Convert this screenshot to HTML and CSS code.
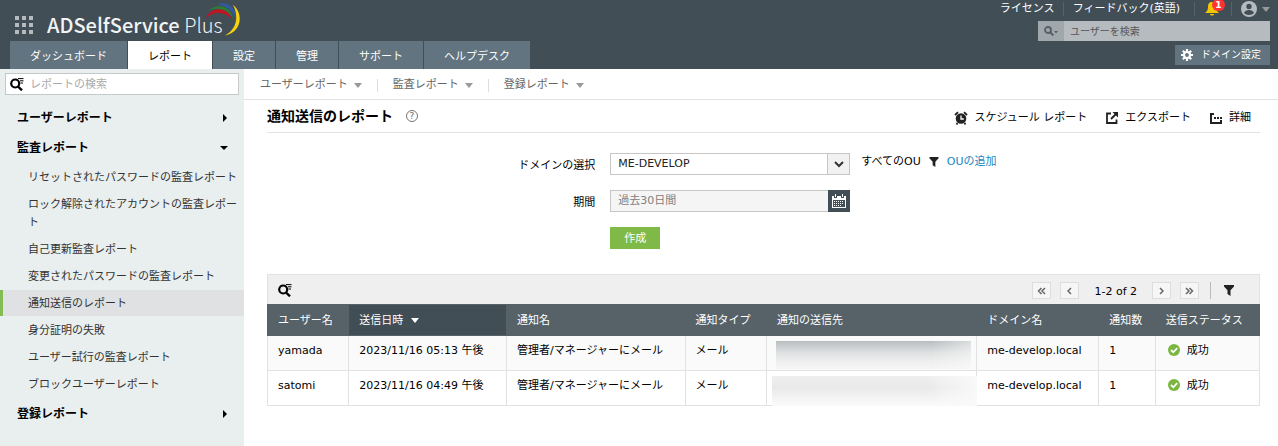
FILE: index.html
```html
<!DOCTYPE html>
<html lang="ja">
  <head>
    <title>ADSelfService Plus</title>
    <meta charset="utf-8" />
    <meta name="viewport" content="width=device-width" />
    <link rel="stylesheet" href="styles.css">
  </head>
  <body>
    <!-- shared icons -->
    <svg class="sprite">
      <symbol id="icon-find" viewBox="0 0 14 13">
        <circle cx="5.200" cy="5.500" r="4" fill="none" stroke="#000" stroke-width="2.2" />
        <path d="M8 8.500l4 3.800" fill="none" stroke="#000" stroke-width="2.4" />
        <path d="M8 .6h5.500M10 2.800h3.500M10.500 5h2.500" stroke="#000" />
      </symbol>
      <symbol id="icon-filter" viewBox="0 0 10 11">
        <path d="M0 0h10v1.5L6.5 5.2V11L3.5 9V5.2L0 1.500z" fill="#222" />
      </symbol>
      <symbol id="icon-ok" viewBox="0 0 12 12">
        <circle cx="6" cy="6" r="6" fill="#7ab640" />
        <path d="M3 6l2.300 2.300L9.200 4.200" fill="none" stroke="#fff" stroke-width="1.8" />
      </symbol>
    </svg>

    <header class="header">
      <div class="headerLeft">
        <div class="brand">
          <button class="apps" aria-label="アプリ">
            <svg width="18" height="18" viewBox="0 0 18 18" fill="#b4babd">
              <path d="M0 0h4v4H0zM7 0h4v4H7zM14 0h4v4h-4zM0 7h4v4H0zM7 7h4v4H7zM14 7h4v4h-4zM0 14h4v4H0zM7 14h4v4H7zM14 14h4v4h-4z" />
            </svg>
          </button>
          <a class="logo" href="#">
            <b>ADSelfService</b> <span>Plus</span>
            <svg class="swoosh" width="36" height="34" viewBox="0 0 36 34">
              <path d="M1 16C4 4 22 2 27 16C20 9 8 7 1 16z" fill="#c01525" />
              <path d="M3 8C12 -1 27 3 28 16C24 7 13 3 3 8z" fill="#2c7d35" />
              <path d="M12 1C23 -2 32 5 31 18C29 8 22 3 12 1z" fill="#2f5ba5" />
              <path d="M28 2C38 9 38 29 20 32.500C32 26 34 13 28 2z" fill="#f6d210" />
            </svg>
          </a>
        </div>
        <nav class="tabs">
          <a href="#">ダッシュボード</a>
          <a href="#" class="active">レポート</a>
          <a href="#">設定</a>
          <a href="#">管理</a>
          <a href="#">サポート</a>
          <a href="#">ヘルプデスク</a>
        </nav>
      </div>
      <div class="headerRight">
        <div class="topLinks">
          <a href="#">ライセンス</a>
          <a href="#" class="feedback">フィードバック(英語)</a>
          <button class="bell" aria-label="通知">
            <svg width="14" height="14" viewBox="0 0 14 14" fill="#f2c700">
              <path d="M7 0c3 0 4 2 4 5 0 3 1 4 3 6H0c2-2 3-3 3-6 0-3 1-5 4-5zM5 12h4c0 2-4 2-4 0z" />
            </svg>
            <span class="badge">1</span>
          </button>
          <button class="user" aria-label="アカウント">
            <svg width="16" height="16" viewBox="0 0 16 16">
              <circle cx="8" cy="8" r="8" fill="#b4bcc1" />
              <circle cx="8" cy="5.500" r="2.700" fill="#424e56" />
              <path d="M3 12c1-4 9-4 10 0-2 2.500-8 2.500-10 0z" fill="#424e56" />
            </svg>
            <i class="caret"></i>
          </button>
        </div>
        <div class="userSearch">
          <button aria-label="検索">
            <svg width="15" height="10" viewBox="0 0 15 10">
              <circle cx="4" cy="4" r="3" fill="none" stroke="#566066" stroke-width="1.800" />
              <path d="M6.200 6.200L9.400 9.400" stroke="#566066" stroke-width="2" />
              <path d="M10 5h4l-2 2.500z" fill="#566066" />
            </svg>
          </button>
          <input type="text" placeholder="ユーザーを検索" aria-label="ユーザーを検索" />
        </div>
        <button class="domainBtn">
          <svg width="12" height="12" viewBox="0 0 12 12">
            <g stroke="#fff" stroke-width="2.200">
              <path d="M6 0v12M0 6h12M1.800 1.800l8.400 8.400M10.200 1.800l-8.400 8.400" />
            </g>
            <circle cx="6" cy="6" r="4" fill="#fff" />
            <circle cx="6" cy="6" r="1.900" fill="#61747f" />
          </svg>
          ドメイン設定
        </button>
      </div>
    </header>

    <div class="page">
      <aside class="sidebar">
        <div class="reportSearch">
          <svg width="14" height="13"><use href="#icon-find" /></svg>
          <input type="text" placeholder="レポートの検索" aria-label="レポートの検索" />
        </div>
        <button class="group">ユーザーレポート <i class="arrowRight"></i></button>
        <button class="group">監査レポート <i class="arrowDown"></i></button>
        <ul class="reports">
          <li><a href="#">リセットされたパスワードの監査レポート</a></li>
          <li><a href="#">ロック解除されたアカウントの監査レポート</a></li>
          <li><a href="#">自己更新監査レポート</a></li>
          <li><a href="#">変更されたパスワードの監査レポート</a></li>
          <li><a href="#" class="active">通知送信のレポート</a></li>
          <li><a href="#">身分証明の失敗</a></li>
          <li><a href="#">ユーザー試行の監査レポート</a></li>
          <li><a href="#">ブロックユーザーレポート</a></li>
        </ul>
        <button class="group">登録レポート <i class="arrowRight"></i></button>
      </aside>

      <main class="main">
        <nav class="subMenu">
          <a href="#">ユーザーレポート <i class="caret"></i></a>
          <a href="#">監査レポート <i class="caret"></i></a>
          <a href="#">登録レポート <i class="caret"></i></a>
        </nav>

        <div class="content">
          <div class="titleBar">
            <h1>通知送信のレポート</h1>
            <button class="help" aria-label="ヘルプ">?</button>
            <div class="actions">
              <a href="#">
                <svg width="14" height="14" viewBox="0 0 14 14">
                  <circle cx="7" cy="7.500" r="5.300" fill="#222" />
                  <path d="M1 4L4 1.200M13 4L10 1.200M3.500 12l-1 1.500M10.500 12l1 1.500" stroke="#222" stroke-width="1.800" />
                  <path d="M7 4.500v3.500h2.800" fill="none" stroke="#fff" stroke-width="1.300" />
                </svg>
                スケジュール レポート
              </a>
              <a href="#">
                <svg width="12" height="12" viewBox="0 0 12 12" fill="none" stroke="#222" stroke-width="1.800">
                  <path d="M5 1.500H1v9.500h9.500V7.500M5 7l5-5" />
                  <path d="M6.500 0H12v5.500z" fill="#222" stroke="none" />
                </svg>
                エクスポート
              </a>
              <a href="#">
                <svg width="12" height="12" viewBox="0 0 12 12" fill="none" stroke="#222">
                  <path d="M4 2H1v9h10V8" stroke-width="2" />
                  <path d="M4 6h2M7 6h2M10 6h2" stroke-width="2" />
                </svg>
                詳細
              </a>
            </div>
          </div>

          <form class="filters">
            <label for="domain">ドメインの選択</label>
            <div class="selectBox">
              <select id="domain">
                <option>ME-DEVELOP</option>
              </select>
              <svg width="10" height="7" viewBox="0 0 10 7"><path d="M1 1l4 4 4-4" fill="none" stroke="#333" stroke-width="2" /></svg>
            </div>
            <div class="ou">
              <span>すべてのOU</span>
              <svg width="10" height="10"><use href="#icon-filter" /></svg>
              <a href="#">OUの追加</a>
            </div>

            <label for="period">期間</label>
            <div class="dateBox">
              <input type="text" id="period" value="過去30日間" readonly />
              <button type="button" aria-label="カレンダー">
                <svg width="14" height="14" viewBox="0 0 14 14">
                  <path d="M0 2h14v12H0z" fill="#fff" />
                  <path d="M1 6h12v7H1z" fill="#424e56" />
                  <path d="M2 0h3v4H2zM9 0h3v4H9z" fill="#424e56" />
                  <path d="M3 0h1v3H3zM10 0h1v3h-1z" fill="#fff" />
                  <path d="M2 7.500h10M2 9.500h10M2 11.500h8" stroke="#fff" stroke-dasharray="1 1" />
                </svg>
              </button>
            </div>

            <button type="button" class="generate">作成</button>
          </form>

          <div class="toolbar">
            <button class="plain" aria-label="検索"><svg width="14" height="13"><use href="#icon-find" /></svg></button>
            <div class="pagination">
              <button class="pageBtn" aria-label="最初"><svg width="9" height="8" viewBox="0 0 9 8"><path d="M4.500 1l-3 3 3 3M8 1L5 4l3 3" /></svg></button>
              <button class="pageBtn" aria-label="前へ"><svg width="5" height="8" viewBox="0 0 5 8"><path d="M4 1L1 4l3 3" /></svg></button>
              <span>1-2 of 2</span>
              <button class="pageBtn" aria-label="次へ"><svg width="5" height="8" viewBox="0 0 5 8"><path d="M1 1l3 3-3 3" /></svg></button>
              <button class="pageBtn" aria-label="最後"><svg width="9" height="8" viewBox="0 0 9 8"><path d="M1 1l3 3-3 3M4.500 1l3 3-3 3" /></svg></button>
              <button class="plain filterBtn" aria-label="フィルター"><svg width="10" height="11"><use href="#icon-filter" /></svg></button>
            </div>
          </div>
          <table>
            <colgroup>
              <col class="colUser" />
              <col class="colDate" />
              <col class="colName" />
              <col class="colType" />
              <col class="colTo" />
              <col class="colDomain" />
              <col class="colCount" />
              <col class="colStatus" />
            </colgroup>
            <thead>
              <tr>
                <th>ユーザー名</th>
                <th class="sorted">送信日時 <i class="caret"></i></th>
                <th>通知名</th>
                <th>通知タイプ</th>
                <th>通知の送信先</th>
                <th>ドメイン名</th>
                <th>通知数</th>
                <th>送信ステータス</th>
              </tr>
            </thead>
            <tbody>
              <tr>
                <td>yamada</td>
                <td>2023/11/16 05:13 午後</td>
                <td>管理者/マネージャーにメール</td>
                <td>メール</td>
                <td class="masked"><div class="mask dark"></div></td>
                <td>me-develop.local</td>
                <td>1</td>
                <td><svg class="ok" width="12" height="12"><use href="#icon-ok" /></svg>成功</td>
              </tr>
              <tr>
                <td>satomi</td>
                <td>2023/11/16 04:49 午後</td>
                <td>管理者/マネージャーにメール</td>
                <td>メール</td>
                <td class="masked"><div class="mask light"></div></td>
                <td>me-develop.local</td>
                <td>1</td>
                <td><svg class="ok" width="12" height="12"><use href="#icon-ok" /></svg>成功</td>
              </tr>
            </tbody>
          </table>
        </div>
      </main>
    </div>
  </body>
</html>
```
FILE: styles.css
```css
* {
  box-sizing: border-box;
}
body {
  margin: 0;
  min-height: 100vh;
  display: flex;
  flex-direction: column;
  font: 11px/18px "DejaVu Sans", "Noto Sans CJK JP", sans-serif;
  color: #000;
  background-color: #fff;
}
a {
  color: inherit;
  text-decoration: none;
}
button,
input,
select {
  font: inherit;
  color: inherit;
  margin: 0;
  padding: 0;
  border: none;
  border-radius: 0;
  background: none;
}
button {
  cursor: pointer;
}
svg {
  display: block;
  flex: none;
}
.sprite {
  position: absolute;
  width: 0;
  height: 0;
}
.caret {
  border: 4px solid transparent;
  border-top: 5px solid #999;
  border-bottom: none;
}

/* header */
.header {
  display: flex;
  justify-content: space-between;
  height: 69px;
  background-color: #424e56;
  color: #fff;
}
.headerLeft {
  display: flex;
  flex-direction: column;
  justify-content: space-between;
  padding-left: 10px;
}
.brand {
  display: flex;
  align-items: center;
  padding: 10px 0 0 5px;
}
.logo {
  position: relative;
  margin-left: 14px;
  font: 20px/30px "Noto Sans CJK JP", sans-serif;
  color: #f2f3f3;
}
.logo b {
  font-weight: 500;
}
.logo span {
  font-weight: 300;
}
.swoosh {
  position: absolute;
  left: 158px;
  top: -7px;
}
.tabs {
  display: flex;
  gap: 1px;
}
.tabs a {
  padding: 7px 20px 3px;
  background-color: #61747f;
}
.tabs .active {
  background-color: #fff;
  color: #000;
}
.headerRight {
  display: flex;
  flex-direction: column;
  align-items: flex-end;
  gap: 3px;
  padding-right: 8px;
}
.topLinks {
  display: flex;
  align-items: center;
  height: 18px;
}
.topLinks > * + * {
  display: flex;
  align-items: center;
  height: 14px;
  margin-left: 8px;
  padding-left: 9px;
  border-left: 1px solid #56626a;
}
.topLinks .bell {
  position: relative;
  margin-left: 14px;
  padding: 0 12px 0 10px;
}
.topLinks .user {
  gap: 5px;
  margin-left: 0;
}
.badge {
  position: absolute;
  left: 17px;
  top: -3px;
  width: 13px;
  height: 12px;
  border-radius: 6px;
  background-color: #f33;
  font: bold 9px/12px "DejaVu Sans", sans-serif;
}
.userSearch {
  display: flex;
  width: 232px;
  height: 20px;
  background-color: #b5bbbe;
}
.userSearch button {
  display: flex;
  align-items: center;
  width: 26px;
  padding-left: 6px;
  background-color: #a0a8ac;
}
.userSearch input {
  flex: 1;
  min-width: 0;
  padding: 2px 0 0 6px;
  font-size: 10px;
}
.userSearch input::placeholder {
  color: #555;
}
.domainBtn {
  display: flex;
  align-items: center;
  gap: 8px;
  height: 20px;
  margin-top: 1px;
  padding: 0 9px 0 6px;
  background-color: #61747f;
  font-size: 10px;
}

/* sidebar */
.page {
  flex: 1;
  display: flex;
}
.sidebar {
  flex: none;
  width: 244px;
  background-color: #e9eeef;
}
.reportSearch {
  display: flex;
  align-items: center;
  gap: 6px;
  height: 22px;
  margin: 4px 5px 7px;
  padding-left: 4px;
  border: 1px solid #c6c9ca;
  background-color: #fff;
}
.reportSearch input {
  flex: 1;
  min-width: 0;
  padding-top: 2px;
}
.reportSearch input::placeholder {
  color: #aaa;
}
.group {
  display: flex;
  align-items: center;
  justify-content: space-between;
  width: 100%;
  height: 30px;
  padding: 2px 16px 0 17px;
  font-size: 12px;
  font-weight: bold;
}
.arrowRight {
  margin-right: 1px;
  border: 4px solid transparent;
  border-left: 4px solid #000;
  border-right: none;
}
.arrowDown {
  border: 4px solid transparent;
  border-top: 4px solid #000;
  border-bottom: none;
}
.reports {
  list-style: none;
  margin: 0;
  padding: 2px 0 0;
}
.reports a {
  display: block;
  margin-bottom: 1px;
  padding: 5px 5px 3px 25px;
  border-left: 3px solid transparent;
  color: #333;
}
.reports .active {
  border-left-color: #82bc53;
  background-color: #dfe1e3;
}

/* main */
.main {
  flex: 1;
  min-width: 0;
}
.subMenu {
  display: flex;
  align-items: center;
  height: 31px;
  padding: 2px 0 0 16px;
  border-bottom: 1px solid #e2e2e2;
  color: #666;
}
.subMenu a {
  display: flex;
  align-items: center;
  gap: 6px;
  height: 13px;
}
.subMenu a + a {
  margin-left: 15px;
  padding-left: 15px;
  border-left: 1px solid #ddd;
}
.content {
  padding: 0 18px 0 23px;
}
.titleBar {
  display: flex;
  align-items: center;
  height: 33px;
  border-bottom: 1px solid #e2e2e2;
}
h1 {
  margin: 0;
  font-size: 14px;
}
.help {
  width: 12px;
  height: 12px;
  margin-left: 13px;
  border: 1px solid #777;
  border-radius: 6px;
  font-size: 9px;
  line-height: 10px;
  color: #666;
}
.actions {
  display: flex;
  gap: 19px;
  margin-left: auto;
  padding: 4px 9px 0 0;
}
.actions a {
  display: flex;
  align-items: center;
  gap: 7px;
}

/* filters */
.filters {
  display: grid;
  grid-template-columns: 5fr 240px 6fr;
  gap: 15px 11px;
  align-items: center;
  padding: 20px 0 25px;
}
.filters label {
  padding: 3px 4px 0 0;
  text-align: right;
}
.selectBox {
  position: relative;
  height: 22px;
}
.selectBox select {
  appearance: none;
  width: 100%;
  height: 22px;
  padding-left: 7px;
  border: 1px solid #c6c6c6;
  background: linear-gradient(#c6c6c6, #c6c6c6) right 21px top / 1px 100% no-repeat,
    linear-gradient(#f1f1f1, #f1f1f1) right / 21px 100% no-repeat;
  color: #222;
}
.selectBox svg {
  position: absolute;
  right: 6px;
  top: 8px;
  pointer-events: none;
}
.ou {
  display: flex;
  align-items: center;
  gap: 8px;
  padding-bottom: 4px;
  line-height: 16px;
}
.ou a {
  color: #1787c1;
}
.dateBox {
  display: flex;
  height: 22px;
}
.dateBox input {
  flex: 1;
  min-width: 0;
  padding-left: 7px;
  border: 1px solid #c6c6c6;
  border-right: none;
  background-color: #f5f5f5;
  color: #808080;
}
.dateBox button {
  display: grid;
  place-items: center;
  width: 22px;
  background-color: #424e56;
}
.generate {
  grid-column: 2;
  justify-self: start;
  width: 50px;
  height: 22px;
  padding-top: 2px;
  background-color: #7fba49;
  color: #fff;
}

/* table */
.toolbar {
  display: flex;
  align-items: center;
  justify-content: space-between;
  height: 30px;
  padding: 2px 25px 0 10px;
  border: 1px solid #e2e2e2;
  border-bottom: none;
  background-color: #efefef;
}
.pagination {
  display: flex;
  align-items: center;
  gap: 9px;
}
.pagination span {
  margin: 2px 6px 0;
}
.pageBtn {
  display: grid;
  place-items: center;
  width: 19px;
  height: 17px;
  border: 1px solid #ddd;
  background-color: #f6f6f6;
}
.pageBtn path {
  fill: none;
  stroke: #666;
  stroke-width: 1.5;
}
.filterBtn {
  margin-left: 2px;
  padding: 3px 0 3px 13px;
  border-left: 1px solid #bbb;
}
table {
  width: 100%;
  table-layout: fixed;
  border-collapse: collapse;
}
.colUser,
.colType {
  width: 8.2%;
}
.colDate {
  width: 15.9%;
}
.colName {
  width: 18%;
}
.colTo {
  width: 21.2%;
}
.colDomain {
  width: 12.3%;
}
.colCount {
  width: 5.7%;
}
th {
  height: 31px;
  padding: 2px 10px 0;
  border: 1px solid #566168;
  background-color: #566168;
  color: #fff;
  font-weight: normal;
  text-align: left;
  white-space: nowrap;
}
.sorted {
  background-color: #424e56;
}
th .caret {
  display: inline-block;
  margin-left: 4px;
  vertical-align: 1px;
  border-top-color: #fff;
}
td {
  height: 35px;
  padding: 0 10px 4px;
  border: 1px solid #e2e2e2;
  white-space: nowrap;
}
tbody tr:first-child {
  background-color: #fafafa;
}
.ok {
  display: inline-block;
  margin: 0 7px 0 2px;
  vertical-align: -2px;
}
.masked {
  position: relative;
}
.mask {
  position: absolute;
}
.mask.dark {
  inset: 5px 5px 1px 9px;
  background: linear-gradient(to right, transparent 80%, rgba(250, 250, 250, 0.5)),
    linear-gradient(#b9bec1, #dddfe0 40%, #efefef 75%, #f5f5f5);
}
.mask.light {
  inset: 5px -1px -1px 5px;
  background: linear-gradient(to right, transparent 75%, #f9f9f9),
    linear-gradient(#efefef, #e9e9e9 40%, #f4f4f4 75%, #fafafa);
}
```
